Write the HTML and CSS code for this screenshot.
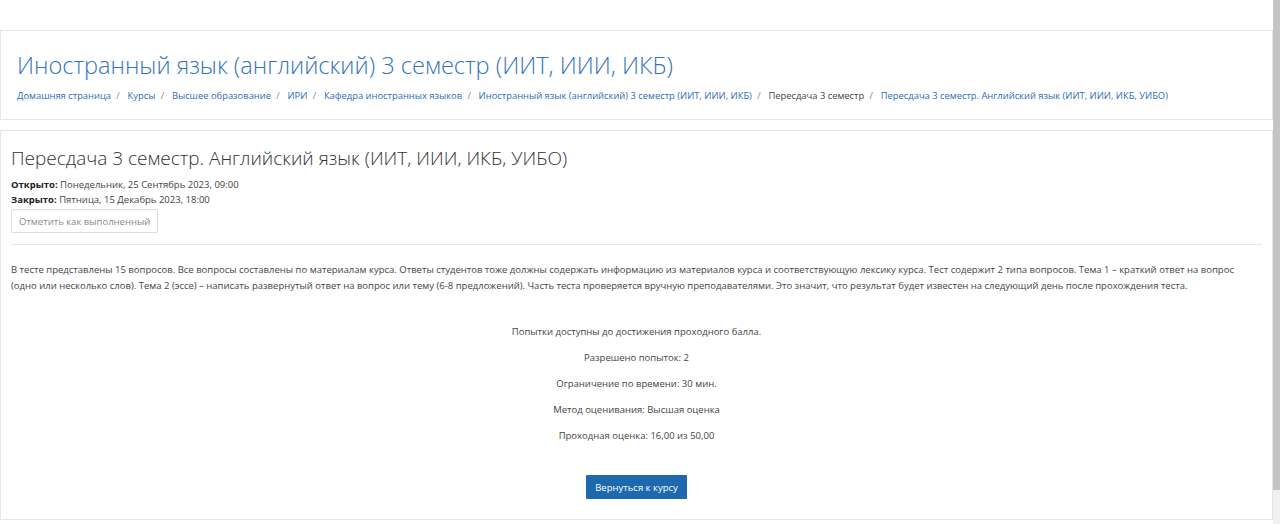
FILE: index.html
```html
<!DOCTYPE html>
<html lang="ru">
<head>
<meta charset="utf-8">
<title>Пересдача 3 семестр</title>
<link rel="stylesheet" href="styles.css">
</head>
<body>
<div class="page">
  <div class="main">
    <header class="card header-card">
      <h1 class="course-title">Иностранный язык (английский) 3 семестр (ИИТ, ИИИ, ИКБ)</h1>
      <nav class="crumbs">
        <a href="#">Домашняя страница</a><span class="sep">/</span>
        <a href="#">Курсы</a><span class="sep">/</span>
        <a href="#">Высшее образование</a><span class="sep">/</span>
        <a href="#">ИРИ</a><span class="sep">/</span>
        <a href="#">Кафедра иностранных языков</a><span class="sep">/</span>
        <a href="#">Иностранный язык (английский) 3 семестр (ИИТ, ИИИ, ИКБ)</a><span class="sep">/</span>
        <span class="current">Пересдача 3 семестр</span><span class="sep">/</span>
        <a href="#">Пересдача 3 семестр. Английский язык (ИИТ, ИИИ, ИКБ, УИБО)</a>
      </nav>
    </header>
    <section class="card content-card">
      <h2 class="quiz-title">Пересдача 3 семестр. Английский язык (ИИТ, ИИИ, ИКБ, УИБО)</h2>
      <div class="dates">
        <div><b>Открыто:</b> Понедельник, 25 Сентябрь 2023, 09:00</div>
        <div><b>Закрыто:</b> Пятница, 15 Декабрь 2023, 18:00</div>
      </div>
      <button class="btn-outline">Отметить как выполненный</button>
      <hr class="divider">
      <p class="intro">В тесте представлены 15 вопросов. Все вопросы составлены по материалам курса. Ответы студентов тоже должны содержать информацию из материалов курса и соответствующую лексику курса. Тест содержит 2 типа вопросов. Тема 1 – краткий ответ на вопрос (одно или несколько слов). Тема 2 (эссе) – написать развернутый ответ на вопрос или тему (6-8 предложений). Часть теста проверяется вручную преподавателями. Это значит, что результат будет известен на следующий день после прохождения теста.</p>
      <div class="info">
        <p>Попытки доступны до достижения проходного балла.</p>
        <p>Разрешено попыток: 2</p>
        <p>Ограничение по времени: 30 мин.</p>
        <p>Метод оценивания: Высшая оценка</p>
        <p>Проходная оценка: 16,00 из 50,00</p>
      </div>
      <div class="actions">
        <button class="btn-primary">Вернуться к курсу</button>
      </div>
    </section>
  </div>
  <div class="scrollbar"><div class="thumb"></div></div>
</div>
</body>
</html>
```

FILE: styles.css
```css
* { box-sizing: border-box; }
html, body { margin: 0; padding: 0; }
body {
  background: #fff;
  font-family: "Open Sans", "Noto Sans", sans-serif;
  color: #333;
  font-size: 9.5px;
}
.page {
  display: flex;
  height: 524px;
  overflow: hidden;
}
.main {
  flex: 1;
  padding-top: 30px;
}
.scrollbar {
  width: 7px;
  background: #f0f0f0;
  display: flex;
  flex-direction: column;
}
.thumb {
  height: 490px;
  background: #c4c4c4;
}
.card {
  border: 1px solid #e6e6e6;
  background: #fff;
}
.header-card {
  height: 90px;
  padding: 20px 16px 0;
}
.course-title {
  margin: 0;
  font-weight: 300;
  font-size: 23.6px;
  line-height: 28px;
  color: #3474bd;
}
.crumbs {
  margin-top: 10px;
  font-size: 9.4px;
  line-height: 14px;
  white-space: nowrap;
}
.crumbs a { color: #2e6cb4; text-decoration: none; }
.crumbs .current { color: #444; }
.crumbs .sep { color: #888; margin: 0 5.3px; }
.content-card {
  margin-top: 10px;
  height: 390px;
  padding: 14px 10px 0;
}
.quiz-title {
  margin: 0;
  font-weight: 300;
  font-size: 19px;
  line-height: 26px;
  color: #333;
}
.dates {
  margin-top: 6px;
  line-height: 15px;
  color: #444;
}
.dates b { color: #222; font-weight: 700; }
.btn-outline {
  margin-top: 2px;
  font-family: inherit;
  font-size: 9.5px;
  color: #8a8a8a;
  background: #fff;
  border: 1px solid #dcdcdc;
  border-radius: 2px;
  height: 24px;
  padding: 0 7px;
}
.divider {
  border: 0;
  border-top: 1px solid #e8e8e8;
  margin: 11px 0 0;
}
.intro {
  margin: 17px 0 0;
  line-height: 16px;
  color: #444;
}
.info {
  margin-top: 31px;
  text-align: center;
  color: #444;
}
.info p {
  margin: 0 0 12px;
  line-height: 14px;
}
.actions {
  margin-top: 32px;
  text-align: center;
}
.btn-primary {
  font-family: inherit;
  font-size: 9.5px;
  color: #fff;
  background: #1d68ae;
  border: 0;
  border-radius: 1px;
  height: 24px;
  padding: 0 9px;
}
```
